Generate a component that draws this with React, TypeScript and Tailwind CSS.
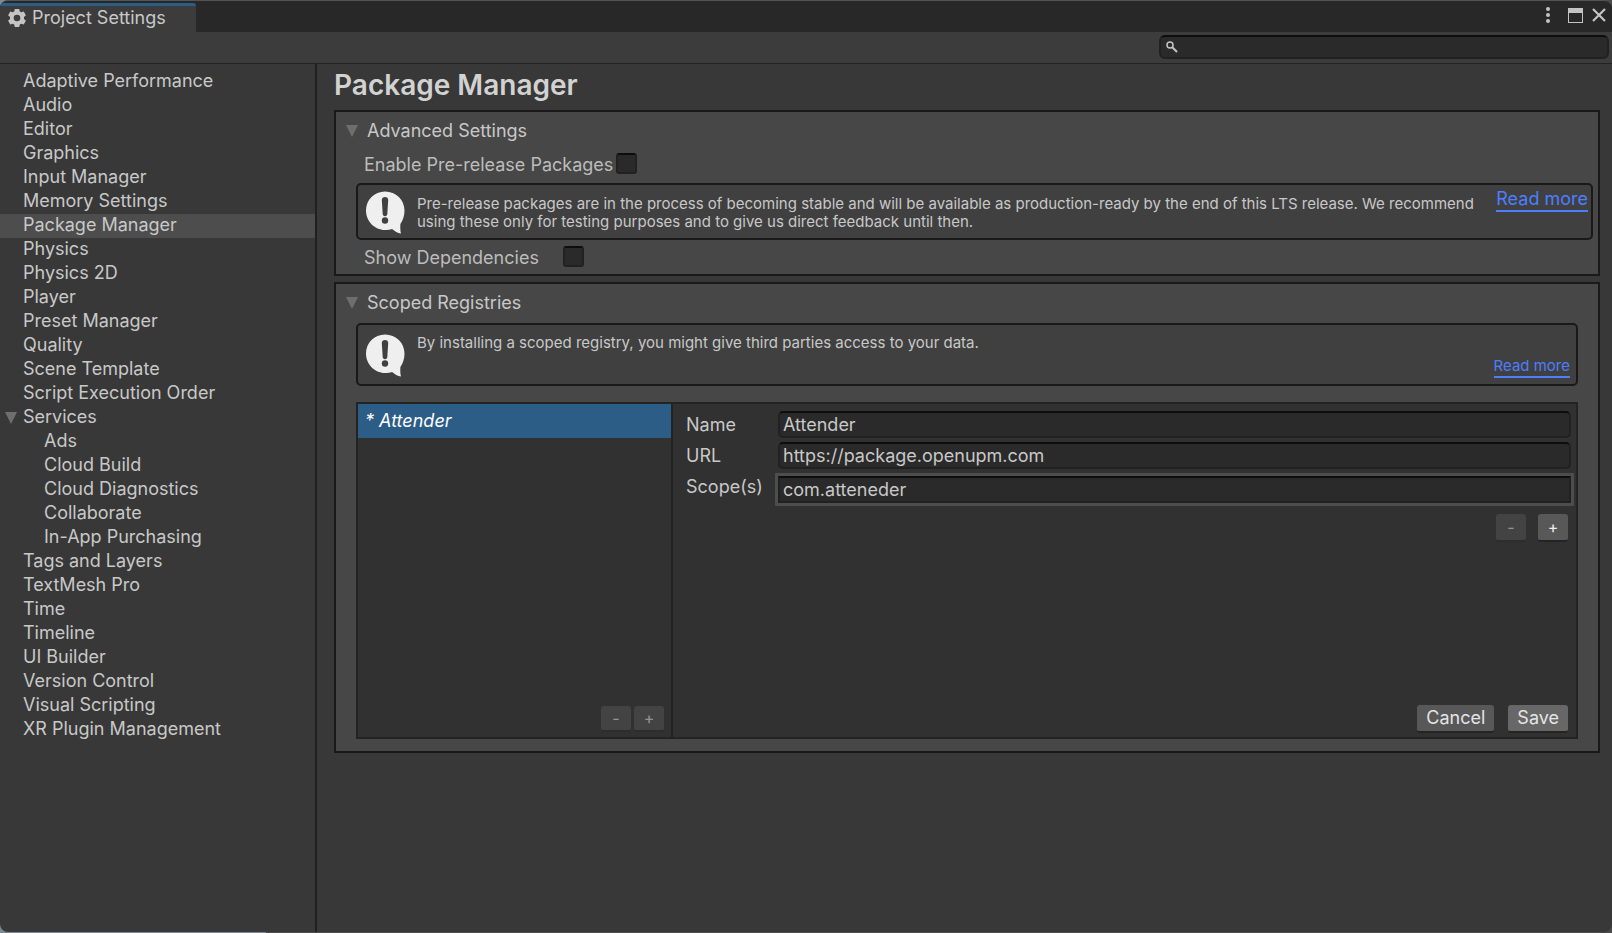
import React from "react";

type Item = { label: string; children?: string[] };

const items: Item[] = [
  { label: "Adaptive Performance" },
  { label: "Audio" },
  { label: "Editor" },
  { label: "Graphics" },
  { label: "Input Manager" },
  { label: "Memory Settings" },
  { label: "Package Manager" },
  { label: "Physics" },
  { label: "Physics 2D" },
  { label: "Player" },
  { label: "Preset Manager" },
  { label: "Quality" },
  { label: "Scene Template" },
  { label: "Script Execution Order" },
  {
    label: "Services",
    children: ["Ads", "Cloud Build", "Cloud Diagnostics", "Collaborate", "In-App Purchasing"],
  },
  { label: "Tags and Layers" },
  { label: "TextMesh Pro" },
  { label: "Time" },
  { label: "Timeline" },
  { label: "UI Builder" },
  { label: "Version Control" },
  { label: "Visual Scripting" },
  { label: "XR Plugin Management" },
];

function GearIcon() {
  return (
    <svg width="18" height="18" viewBox="0 0 18 18" fill="#c4c4c4" fillRule="evenodd" aria-hidden="true">
      <path d="M6.800 0h4.400l.6 2.500 1.400.8 2.500-.8 2.200 3.800-1.900 1.800v1.800l1.900 1.800-2.200 3.800-2.500-.8-1.400.8-.6 2.500H6.800l-.6-2.500-1.400-.8-2.500.8L.1 11.700 2 9.900V8.100L.1 6.300l2.200-3.800 2.500.8 1.400-.8zM9 5.700a3.300 3.300 0 1 0 0 6.600 3.300 3.300 0 0 0 0-6.600z" />
    </svg>
  );
}

function Triangle() {
  return (
    <svg width="12" height="12" viewBox="0 0 12 12" className="shrink-0" aria-hidden="true">
      <path d="M0 0h12L6 12z" fill="#6e6e6e" />
    </svg>
  );
}

function InfoIcon() {
  return (
    <svg width="40" height="43" viewBox="0 0 40 43" className="shrink-0" aria-hidden="true">
      <path
        d="M20 .5C9.400.5 1 8.900 1 19.500S9.400 39 20 39c2.800 0 5-.3 7-1 2.800 2.300 5.500 4 9 4.500-.8-2.800-.8-6.500-.6-9.500 2.600-3.700 4.100-8.300 4.100-13.500C39.500 8.900 31 .5 20 .5z"
        fill="#efefef"
      />
      <path d="M16.800 9c0-2 1.300-3 3.200-3s3.200 1 3.200 3l-.9 14c-.1 1.400-1 2.200-2.300 2.200s-2.200-.8-2.300-2.200z" fill="#404040" />
      <circle cx="20" cy="29.500" r="3.200" fill="#404040" />
    </svg>
  );
}

function TreeLink({ label, className = "" }: { label: string; className?: string }) {
  const active = label === "Package Manager";
  return (
    <a
      href="#"
      aria-current={active ? "page" : undefined}
      className={`block h-6 leading-[22px] ${active ? "bg-[#4d4d4d]" : ""} ${className}`}
    >
      {label}
    </a>
  );
}

function Check({ id }: { id: string }) {
  return (
    <input
      id={id}
      type="checkbox"
      className="size-[21px] appearance-none rounded-[3px] border-2 border-[#212121] border-t-[#0d0d0d] bg-[#2a2a2a] checked:bg-[#2c5d87]"
    />
  );
}

function SmallButton({
  children,
  label,
  bright = false,
  className = "h-7",
}: {
  children: string;
  label: string;
  bright?: boolean;
  className?: string;
}) {
  return (
    <button
      type="button"
      aria-label={label}
      disabled={!bright}
      className={`flex w-[30px] items-center justify-center rounded-[3px] border-b-2 text-base ${className} ${
        bright ? "border-[#242424] bg-[#585858] text-[#eeeeee]" : "border-[#2d2d2d] bg-[#434343] text-[#939393]"
      }`}
    >
      {children}
    </button>
  );
}

function Field({ id, label, value }: { id: string; label: string; value: string }) {
  return (
    <>
      <label htmlFor={id} className="leading-7">
        {label}
      </label>
      <input
        id={id}
        defaultValue={value}
        className="h-[27px] w-full min-w-0 rounded-[5px] border-2 border-[#212121] border-t-[#0d0d0d] bg-[#2a2a2a] px-[3px] pt-px outline-none"
      />
    </>
  );
}

export default function App() {
  return (
    <div className="flex min-h-screen flex-col bg-[linear-gradient(90deg,#7b8a96_266px,#4a4a4a_266px)] pb-px font-['Inter',sans-serif] text-lg text-[#c8c8c8]">
      <div className="flex grow flex-col overflow-hidden rounded-lg border-t border-[#565452] bg-[#383838]">
        <header>
          <div className="flex h-[31px] items-stretch justify-between bg-[#282828]">
            <div className="mt-[2px] flex w-[196px] items-center gap-[6px] rounded-t-[3px] border-t-[3px] border-[#2c5d87] bg-[#3c3c3c] pb-[2px] pl-2">
              <GearIcon />
              <span className="leading-6">Project Settings</span>
            </div>
            <div className="flex items-center gap-[9px] pr-[6px] pb-[3px]">
              <button type="button" aria-label="Menu" className="flex w-[13px] justify-start">
                <svg width="4" height="16" viewBox="0 0 4 16" fill="#c4c4c4">
                  <circle cx="2" cy="2" r="2" />
                  <circle cx="2" cy="8" r="2" />
                  <circle cx="2" cy="14" r="2" />
                </svg>
              </button>
              <button type="button" aria-label="Maximize">
                <svg width="15" height="15" viewBox="0 0 15 15" className="block">
                  <path d="M0 0h15v15H0zM1 5v9h13V5z" fill="#c4c4c4" fillRule="evenodd" />
                </svg>
              </button>
              <button type="button" aria-label="Close">
                <svg width="14" height="14" viewBox="0 0 14 14" className="block">
                  <path d="M1 1l12 12M13 1L1 13" stroke="#c4c4c4" strokeWidth="2.200" fill="none" />
                </svg>
              </button>
            </div>
          </div>
          <div className="flex h-8 items-start justify-end border-b border-[#232323] bg-[#3c3c3c] pt-[3px] pr-[3px]">
            <label className="flex h-6 w-[450px] items-center gap-2 rounded-[6px] border-2 border-[#212121] border-t-[#0d0d0d] bg-[#2a2a2a] pl-[5px]">
              <svg width="12" height="12" viewBox="0 0 12 12" fill="none" stroke="#c4c4c4" aria-hidden="true">
                <circle cx="4" cy="4" r="3" strokeWidth="1.500" />
                <path d="M6.300 6.300L11 11" strokeWidth="2" />
              </svg>
              <input type="search" aria-label="Search settings" className="min-w-0 grow bg-transparent text-sm outline-none" />
            </label>
          </div>
        </header>

        <div className="flex grow">
          <nav className="w-[317px] shrink-0 border-r-2 border-[#202020] pt-[6px]">
            {items.map((item) =>
              item.children ? (
                <details key={item.label} open>
                  <summary className="flex h-6 cursor-default list-none items-center gap-[6px] pl-[5px]">
                    <Triangle />
                    <span className="h-6 leading-[22px]">{item.label}</span>
                  </summary>
                  {item.children.map((c) => (
                    <TreeLink key={c} label={c} className="pl-11" />
                  ))}
                </details>
              ) : (
                <TreeLink key={item.label} label={item.label} className="pl-[23px]" />
              ),
            )}
          </nav>

          <main className="min-w-0 grow pr-3 pl-[17px]">
            <h1 className="pt-[3px] pb-[7px] text-[28px] leading-9 font-semibold text-[#d2d2d2]">Package Manager</h1>

            <section className="border-2 border-[#191919] bg-[#474747] pr-[5px] pb-[5px] pl-5">
              <details open>
                <summary className="-ml-[10px] flex h-9 cursor-default list-none items-center gap-[9px] pt-[2px]">
                  <Triangle />
                  Advanced Settings
                </summary>
                <div className="flex h-[35px] items-start gap-[3px] pt-[5px] pl-2 text-[#bcbcbc]">
                  <label htmlFor="prerelease" className="leading-6">
                    Enable Pre-release Packages
                  </label>
                  <Check id="prerelease" />
                </div>
                <div className="flex items-start rounded-[5px] border-2 border-[#191919] bg-[#404040] pr-[3px] pb-1 pl-[7px]">
                  <div className="pt-[6px]">
                    <InfoIcon />
                  </div>
                  <p className="grow pt-[10px] pr-5 pl-3 text-[15px] leading-[18px]">
                    Pre-release packages are in the process of becoming stable and will be available as production-ready by
                    the end of this LTS release. We recommend using these only for testing purposes and to give us direct
                    feedback until then.
                  </p>
                  <a href="#" className="mt-[3px] shrink-0 border-b-2 border-[#4c7eff] leading-[22px] text-[#4c7eff]">
                    Read more
                  </a>
                </div>
                <div className="flex h-[29px] items-start gap-6 pt-[6px] pl-2 text-[#bcbcbc]">
                  <label htmlFor="deps" className="leading-6">
                    Show Dependencies
                  </label>
                  <Check id="deps" />
                </div>
              </details>
            </section>

            <section className="mt-[6px] border-2 border-[#191919] bg-[#474747] pr-5 pb-3 pl-5">
              <details open>
                <summary className="-ml-[10px] flex h-9 cursor-default list-none items-center gap-[9px] pt-[2px]">
                  <Triangle />
                  Scoped Registries
                </summary>
                <div className="mt-[3px] flex h-[63px] rounded-[5px] border-2 border-[#191919] bg-[#404040] pr-[6px] pl-[7px]">
                  <div className="pt-[9px]">
                    <InfoIcon />
                  </div>
                  <p className="grow pt-[9px] pl-3 text-[15px] leading-[18px]">
                    By installing a scoped registry, you might give third parties access to your data.
                  </p>
                  <a
                    href="#"
                    className="mb-[6px] shrink-0 self-end border-b-2 border-[#4c7eff] text-[15px] leading-5 text-[#4c7eff]"
                  >
                    Read more
                  </a>
                </div>

                <div className="mt-4 flex min-h-[337px] border-2 border-[#232323] bg-[#313131]">
                  <div className="flex w-[315px] shrink-0 flex-col border-r-2 border-[#232323]">
                    <button type="button" className="h-[34px] bg-[#2c5d87] pl-[7px] text-left text-white italic">
                      * Attender
                    </button>
                    <div className="mt-auto flex justify-end gap-[3px] pr-[7px] pb-[5px]">
                      <SmallButton label="Remove registry" className="h-[26px]">
                        -
                      </SmallButton>
                      <SmallButton label="Add registry" className="h-[26px]">
                        +
                      </SmallButton>
                    </div>
                  </div>

                  <form className="flex min-w-0 grow flex-col pr-[5px] pl-[13px]" onSubmit={(e) => e.preventDefault()}>
                    <div className="grid grid-cols-[92px_1fr] items-start gap-y-[3px] pt-[7px]">
                      <Field id="name" label="Name" value="Attender" />
                      <Field id="url" label="URL" value="https://package.openupm.com" />
                      <label htmlFor="scope" className="leading-7">
                        Scope(s)
                      </label>
                      <div className="-mx-[3px] border-[3px] border-[#4d4d4d]">
                        <input
                          id="scope"
                          defaultValue="com.atteneder"
                          className="block h-[27px] w-full border-2 border-[#212121] border-t-[#0d0d0d] bg-[#2a2a2a] px-[3px] pt-px outline-none"
                        />
                      </div>
                    </div>
                    <div className="flex justify-end gap-3 pt-2 pr-[3px]">
                      <SmallButton label="Remove scope">-</SmallButton>
                      <SmallButton label="Add scope" bright>
                        +
                      </SmallButton>
                    </div>
                    <div className="mt-auto flex justify-end gap-[14px] pr-[3px] pb-1">
                      <button
                        type="button"
                        className="h-7 rounded-[3px] border-b-2 border-[#242424] bg-[#585858] px-[9px] leading-6 text-[#e4e4e4]"
                      >
                        Cancel
                      </button>
                      <button
                        type="submit"
                        className="h-7 rounded-[3px] border-b-2 border-[#242424] bg-[#676767] px-[9px] leading-6 text-[#e4e4e4]"
                      >
                        Save
                      </button>
                    </div>
                  </form>
                </div>
              </details>
            </section>
          </main>
        </div>
      </div>
    </div>
  );
}
